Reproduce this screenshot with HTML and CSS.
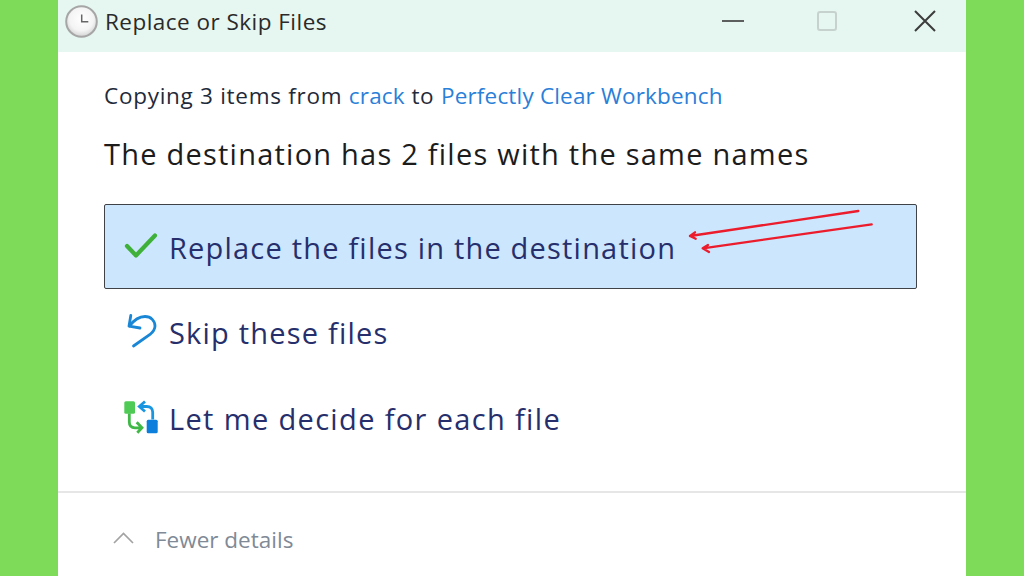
FILE: index.html
```html
<!DOCTYPE html>
<html lang="en">
<head>
<meta charset="utf-8">
<title>Replace or Skip Files</title>
<link rel="stylesheet" href="styles.css">
</head>
<body>
<div class="window">
  <header class="titlebar">
    <svg class="clock" viewBox="0 0 33 33" width="33" height="33">
      <defs><radialGradient id="face" cx="50%" cy="42%" r="55%"><stop offset="0" stop-color="#ffffff"/><stop offset="0.7" stop-color="#f4f4f4"/><stop offset="1" stop-color="#d8d8d8"/></radialGradient></defs>
      <circle cx="16.500" cy="16.500" r="15.300" fill="url(#face)" stroke="#a6a6a6" stroke-width="2"/>
      <path d="M16.700 9.500V16.700H23.300" fill="none" stroke="#666" stroke-width="1.500"/>
    </svg>
    <span class="title">Replace or Skip Files</span>
    <div class="controls">
      <svg class="ctl ctl-min" viewBox="0 0 24 24" width="24" height="24"><path d="M1 12H23" stroke="#444" stroke-width="1.700"/></svg>
      <svg class="ctl" viewBox="0 0 24 24" width="24" height="24"><rect x="3" y="3" width="18" height="18" rx="2" fill="none" stroke="#c6d2ce" stroke-width="2"/></svg>
      <svg class="ctl" viewBox="0 0 24 24" width="24" height="24"><path d="M2 2L22 22M22 2L2 22" stroke="#3c3c3c" stroke-width="2"/></svg>
    </div>
  </header>
  <main class="content">
    <p class="copying">Copying 3 items from <span class="link">crack</span> to <span class="link">Perfectly Clear Workbench</span></p>
    <h1 class="heading">The destination has 2 files with the same names</h1>
    <div class="options">
      <div class="option selected">
        <svg class="opt-icon" viewBox="0 0 34 34" width="34" height="34"><path d="M3 19L12 28.500L31 8.500" fill="none" stroke="#3fb13a" stroke-width="4.200" stroke-linecap="round" stroke-linejoin="round"/></svg>
        <span class="opt-text">Replace the files in the destination</span>
        <svg class="arrows" viewBox="0 0 200 50" width="200" height="50">
          <path d="M169.300 2L1 27M6 23.300L1 27L6.700 29.800" fill="none" stroke="#ec1c2c" stroke-width="2.300" stroke-linecap="round" stroke-linejoin="round"/>
          <path d="M182.700 15.300L13.700 39.300M19 36L13.700 39.300L20 43" fill="none" stroke="#ec1c2c" stroke-width="2.300" stroke-linecap="round" stroke-linejoin="round"/>
        </svg>
      </div>
      <div class="option">
        <svg class="opt-icon" viewBox="0 0 34 34" width="34" height="34">
          <path d="M5.500 13C10 7 15 3.500 21 3.500C27 3.500 31 8 31 13C31 17 29 19 26 21.500L9.500 33" fill="none" stroke="#1a86d6" stroke-width="2.800" stroke-linecap="round"/>
          <path d="M6.800 2.500L5 13.200L16 15" fill="none" stroke="#1a86d6" stroke-width="2.800" stroke-linecap="round" stroke-linejoin="round"/>
        </svg>
        <span class="opt-text">Skip these files</span>
      </div>
      <div class="option">
        <svg class="opt-icon" viewBox="0 0 34 34" width="34" height="34">
          <rect x="0.300" y="2.200" width="10.700" height="12.600" rx="1.500" fill="#4fcb55"/>
          <rect x="22.700" y="20.800" width="11" height="13.400" rx="1.500" fill="#0c7fdc"/>
          <path d="M5.300 14.500V23Q5.300 28.800 11 28.800H18M12.700 23.200L18 28.800L13.300 33.800" fill="none" stroke="#3fb848" stroke-width="2.800"/>
          <path d="M28.700 20.500V13.200Q28.700 7.500 22.700 7.500H15.300M21 2.500L15.300 7.500L21 12.500" fill="none" stroke="#1a96e0" stroke-width="2.800"/>
        </svg>
        <span class="opt-text opt-text-wide">Let me decide for each file</span>
      </div>
    </div>
  </main>
  <footer class="details">
    <svg class="chevron" viewBox="0 0 21 12" width="21" height="12"><path d="M1 11L10.500 1.500L20 11" fill="none" stroke="#a3a3a3" stroke-width="1.700"/></svg>
    <span class="details-text">Fewer details</span>
  </footer>
</div>
</body>
</html>
```
FILE: styles.css
```css
* { box-sizing: border-box; }
html, body { margin: 0; height: 100%; }
body {
  background: #7edb5a;
  font-family: "Open Sans", "Noto Sans", sans-serif;
  overflow: hidden;
}
.window {
  width: 908px;
  height: 576px;
  margin-left: 58px;
  background: #fff;
  display: flex;
  flex-direction: column;
}
.titlebar {
  height: 52px;
  background: #e6f6f0;
  display: flex;
  align-items: center;
  padding: 0 29px 10px 7px;
  flex: none;
}
.clock { flex: none; margin-right: 7px; }
.title { font-size: 22.5px; color: #2a2a2a; flex: 1; letter-spacing: 0.47px; }
.controls { display: flex; gap: 74px; align-items: center; }
.ctl-min { margin-right: -4px; }
.content { flex: 1; padding: 0 49px 0 46px; }
.copying { margin: 27px 0 0; font-size: 22.5px; line-height: 34px; color: #1f2a3a; letter-spacing: 0.72px; }
.link { color: #2a7fd8; letter-spacing: 0.18px; }
.heading { margin: 21px 0 0; font-size: 29px; line-height: 40px; font-weight: 400; color: #1c1c1c; letter-spacing: 1.23px; }
.options { margin-top: 30px; display: flex; flex-direction: column; gap: 1px; }
.option {
  height: 85px;
  display: flex;
  align-items: center;
  padding-left: 19px;
  gap: 11px;
  position: relative;
  border: 1px solid transparent;
}
.option.selected { background: #cbe6fd; border-color: #3f4347; border-radius: 2px; }
.opt-icon { flex: none; margin-top: -6px; overflow: visible; }
.opt-text { font-size: 29px; color: #262f6b; letter-spacing: 1.2px; }
.opt-text-wide { letter-spacing: 1.35px; }
.selected .opt-text { margin-top: 2px; }
.arrows { position: absolute; left: 584px; top: 4px; overflow: visible; }
.details {
  height: 85px;
  flex: none;
  border-top: 2px solid #e6e6e6;
  display: flex;
  align-items: center;
  padding: 9px 0 0 55px;
  gap: 21px;
}
.chevron { margin-top: -3px; }
.details-text { font-size: 22.5px; color: #7f8a96; }
```
